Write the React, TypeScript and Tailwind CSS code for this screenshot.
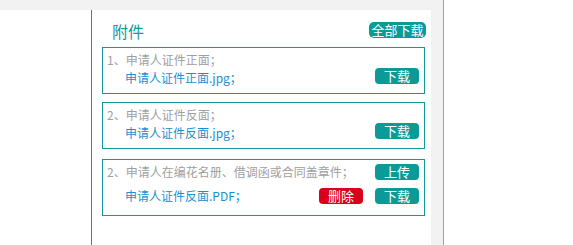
import React from "react";

const font = { fontFamily: '"Microsoft YaHei", "Noto Sans CJK SC", "Noto Sans", sans-serif' };

function Btn({ children, red = false }: { children: React.ReactNode; red?: boolean }) {
  return (
    <span
      className={`flex h-[16px] w-[44px] shrink-0 items-center justify-center rounded-[4px] text-[13px] leading-[16px] text-white ${
        red ? "bg-[#d9001b]" : "bg-[#0a9a98]"
      }`}
    >
      {children}
    </span>
  );
}

function SimpleBox({ label, file, className = "" }: { label: string; file: string; className?: string }) {
  return (
    <div className={`border border-[#17999a] pl-[4px] pr-[5px] pt-[3px] pb-[6px] ${className}`}>
      <div className="h-[18px] text-[12px] leading-[18px] text-[#a0a0a0] whitespace-nowrap">{label}</div>
      <div className="flex h-[18px] items-start justify-between">
        <span className="ml-[18px] text-[12px] leading-[18px] text-[#1a8fd0] whitespace-nowrap">{file}</span>
        <span className="-mt-[1px]">
          <Btn>下载</Btn>
        </span>
      </div>
    </div>
  );
}

export default function App() {
  return (
    <div className="flex h-[245px] w-[573px] bg-white" style={font}>
      <div className="flex w-[443px] shrink-0 flex-col bg-[#f2f2f2] pt-[10px]">
        <div className="flex flex-1">
          <div className="w-[91px] shrink-0 bg-white" />
          <div className="w-[1px] shrink-0 bg-[#707070]" />
          <div className="w-[339px] shrink-0 bg-white pl-[10px] pr-[6px] pt-[12px]">
            <div className="flex h-[16px] items-start justify-between">
              <span className="ml-[10px] mt-[1px] text-[16px] leading-[16px] text-[#17999b]">附件</span>
              <span className="-mr-[1px] flex h-[16px] w-[57px] items-center justify-center rounded-[5px] bg-[#0a9a98] text-[13px] leading-[16px] text-white whitespace-nowrap">
                全部下载
              </span>
            </div>
            <SimpleBox className="mt-[9px]" label="1、申请人证件正面；" file="申请人证件正面.jpg；" />
            <SimpleBox className="mt-[8px]" label="2、申请人证件反面；" file="申请人证件反面.jpg；" />
            <div className="mt-[10px] border border-[#17999a] pl-[4px] pr-[5px] pt-[4px] pb-[11px]">
              <div className="flex h-[16px] items-center justify-between">
                <span className="text-[12px] leading-[16px] text-[#a0a0a0] whitespace-nowrap">
                  2、申请人在编花名册、借调函或合同盖章件；
                </span>
                <Btn>上传</Btn>
              </div>
              <div className="mt-[8px] flex h-[16px] items-center justify-between">
                <span className="ml-[18px] text-[12px] leading-[16px] text-[#1a8fd0] whitespace-nowrap">
                  申请人证件反面.PDF；
                </span>
                <div className="flex gap-[12px]">
                  <Btn red>删除</Btn>
                  <Btn>下载</Btn>
                </div>
              </div>
            </div>
          </div>
        </div>
      </div>
      <div className="w-[1px] shrink-0 bg-[#a0a0a0]" />
      <div className="flex-1 bg-white" />
    </div>
  );
}
